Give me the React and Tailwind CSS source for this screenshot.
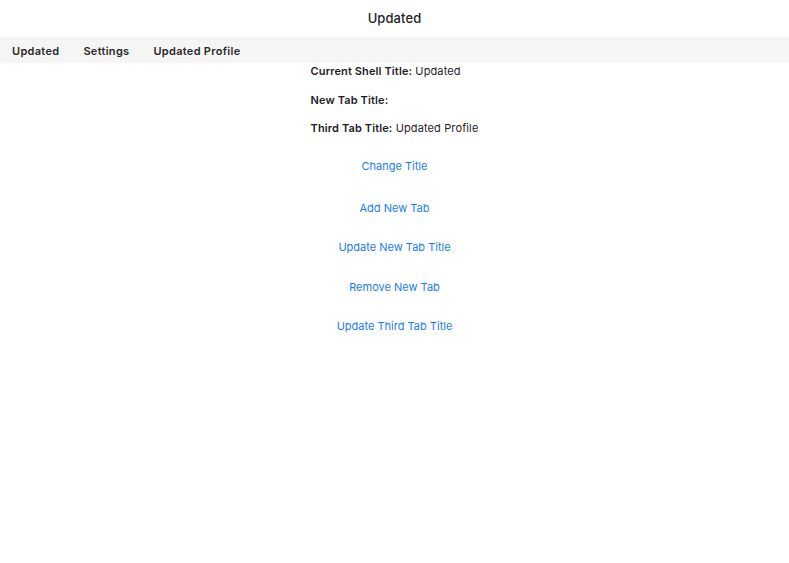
export default function App() {
  const font = { fontFamily: 'Inter, "Noto Sans", sans-serif' };
  const btn = "text-[11px] text-[#1a7cf5] leading-[14px]";
  return (
    <div className="w-[789px] h-[563px] bg-white overflow-hidden" style={font}>
      <div className="w-full h-full bg-white rounded-b-[10px] flex flex-col">
        <div className="h-[37px] flex items-center justify-center">
          <span className="text-[13px] font-medium tracking-[0.1px] text-[#1d1d1f]">Updated</span>
        </div>
        <div className="h-[26px] bg-[#f5f5f5] flex items-center text-[11px] font-semibold tracking-[0.3px] text-[#2a2a2a] pt-[2px]">
          <div className="h-full px-[12px] flex items-center">Updated</div>
          <div className="h-full px-[12px] flex items-center">Settings</div>
          <div className="h-full px-[12px] flex items-center">Updated Profile</div>
        </div>
        <div className="flex flex-col items-center">
          <div className="flex flex-col text-[11px] tracking-[0.12px] text-[#1d1d1f] leading-[14px] pt-[1px]">
            <div><span className="font-semibold">Current Shell Title:</span> Updated</div>
            <div className="mt-[15px]"><span className="font-semibold">New Tab Title:</span></div>
            <div className="mt-[14px]"><span className="font-semibold">Third Tab Title:</span> Updated Profile</div>
          </div>
          <div className={`${btn} mt-[24px]`}>Change Title</div>
          <div className={`${btn} mt-[28px]`}>Add New Tab</div>
          <div className={`${btn} mt-[25px]`}>Update New Tab Title</div>
          <div className={`${btn} mt-[26px]`}>Remove New Tab</div>
          <div className={`${btn} mt-[25px]`}>Update Third Tab Title</div>
        </div>
      </div>
    </div>
  );
}
